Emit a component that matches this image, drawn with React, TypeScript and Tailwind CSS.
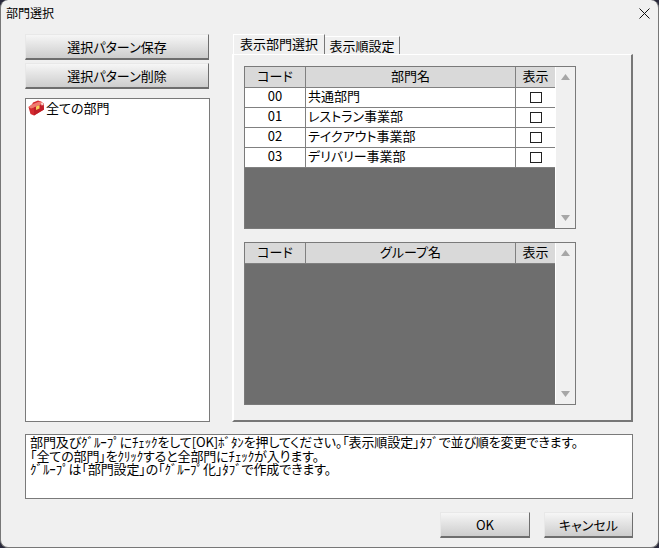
const FONT = '"Noto Sans CJK JP", "Liberation Sans", sans-serif';

const departments = [
  { code: '00', name: '共通部門' },
  { code: '01', name: 'レストラン事業部' },
  { code: '02', name: 'テイクアウト事業部' },
  { code: '03', name: 'デリバリー事業部' },
];

const GradButton = ({ label, className }: { label: string; className: string }) => (
  <button
    className={`flex items-center justify-center bg-gradient-to-b from-[#f6f6f6] to-[#cdcdcd] border border-[#e8e8e8] border-r-[#6e6e6e] border-b-[#6e6e6e] border-b-2 text-[13px] text-black ${className}`}
  >
    {label}
  </button>
);

const FolderIcon = () => (
  <svg width="17" height="17" viewBox="0 0 17 17" className="shrink-0">
    <path d="M0.5 7 L4 4.5 L5 2.5 L10 0.5 L13 1.5 L15.5 3.5 L16 9.5 L6 15.5 L2.5 14 Z" fill="#d42a30" />
    <path d="M0.5 7 L4 4.5 L10 2 L13 1.5 L15.5 3.5 L6 7.5 L3 8.5 Z" fill="#ef7a70" />
    <path d="M6 7.5 L15.5 3.5 L16 9.5 L6 15.5 Z" fill="#c01f28" />
    <path d="M8 6.5 L11.5 5 L11.5 8.5 L8 10 Z" fill="#f6cf5a" />
    <path d="M13 3 L15 2.5 L15.5 5 L13.5 5.5 Z" fill="#f8d8d0" />
  </svg>
);

const Table = ({
  title,
  rows,
}: {
  title: string;
  rows: { code: string; name: string }[];
}) => (
  <div className="flex w-[332px] h-[163px] border border-[#7a7a7a]">
    <div className="flex-1 bg-[#6e6e6e] flex flex-col">
      <div className="flex h-[21px] shrink-0 bg-[#d9d9d9] border-b border-[#808080] text-[13px] text-black">
        <div className="w-[61px] border-r border-[#808080] flex items-center justify-center pb-[3px]">コード</div>
        <div className="w-[210px] border-r border-[#808080] flex items-center justify-center pb-[3px]">{title}</div>
        <div className="flex-1 flex items-center justify-center pb-[3px]">表示</div>
      </div>
      {rows.map((r) => (
        <div key={r.code} className="flex h-[20px] shrink-0 bg-white border-b border-[#808080] text-[13px] text-black">
          <div className="w-[61px] border-r border-[#808080] flex items-center justify-center pb-[4px]">{r.code}</div>
          <div className="w-[210px] border-r border-[#808080] flex items-center pl-[2px] pb-[4px]">{r.name}</div>
          <div className="flex-1 flex items-center justify-center">
            <div className="w-[12px] h-[11px] border border-[#222] bg-white" />
          </div>
        </div>
      ))}
    </div>
    <div className="w-[20px] bg-[#f0f0f0] border-l border-white flex flex-col items-center justify-between py-[7px]">
      <svg width="9" height="6" viewBox="0 0 9 6"><path d="M4.5 0 L9 6 L0 6 Z" fill="#a6a6a6" /></svg>
      <svg width="9" height="6" viewBox="0 0 9 6"><path d="M0 0 L9 0 L4.5 6 Z" fill="#a6a6a6" /></svg>
    </div>
  </div>
);

export default function App() {
  return (
    <div className="w-[659px] h-[548px] bg-[#2a2a3c] [font-feature-settings:'palt']" style={{ fontFamily: FONT }}>
      <div className="w-full h-full bg-[#f0f0f0] rounded-lg border-l border-b border-r border-[#777] flex flex-col">
        {/* title bar */}
        <div className="h-[26px] shrink-0 flex items-center justify-between pl-[5px] pr-[8px] text-xs text-black [font-feature-settings:normal]">
          <span>部門選択</span>
          <svg width="11" height="11" viewBox="0 0 11 11">
            <path d="M0.5 0.5 L10.5 10.5 M10.5 0.5 L0.5 10.5" stroke="#111" strokeWidth="1" />
          </svg>
        </div>

        <div className="flex-1 flex flex-col pl-[24px] pr-[25px] pt-[8px]">
          <div className="flex gap-[22px] h-[388px]">
            {/* left column */}
            <div className="w-[185px] flex flex-col">
              <GradButton label="選択パターン保存" className="h-[26px] w-[184px]" />
              <GradButton label="選択パターン削除" className="h-[26px] w-[184px] mt-[3px]" />
              <div className="mt-[9px] flex-1 bg-white border border-[#7a7a7a] flex items-start gap-px pt-px pl-[2px] text-[13px] leading-[16px] text-black">
                <FolderIcon />
                <span>全ての部門</span>
              </div>
            </div>

            {/* tabs */}
            <div className="flex-1 flex flex-col">
              <div className="flex h-[20px] items-end pl-px text-[13px] text-black">
                <div className="h-[20px] w-[92px] bg-[#f0f0f0] border-t border-l border-white border-r border-r-[#777] flex items-center justify-center pb-px">
                  表示部門選択
                </div>
                <div className="h-[18px] w-[75px] bg-[#f0f0f0] border-t border-white border-r border-r-[#777] flex items-center justify-center">
                  表示順設定
                </div>
              </div>
              <div className="flex-1 border-t border-l-2 border-white border-r-2 border-b-2 border-r-[#777] border-b-[#777] pl-[10px] pt-[11px] flex flex-col gap-[13px]">
                <Table title="部門名" rows={departments} />
                <Table title="グループ名" rows={[]} />
              </div>
            </div>
          </div>

          {/* message */}
          <div className="mt-[12px] h-[65px] bg-white border border-[#7a7a7a] pl-[4px] text-[13px] leading-[13.5px] tracking-[-0.12px] text-black whitespace-pre">
            {'部門及びｸﾞﾙｰﾌﾟにﾁｪｯｸをして[OK]ﾎﾞﾀﾝを押してください。「表示順設定」ﾀﾌﾞで並び順を変更できます。\n「全ての部門」をｸﾘｯｸすると全部門にﾁｪｯｸが入ります。\nｸﾞﾙｰﾌﾟは「部門設定」の「ｸﾞﾙｰﾌﾟ化」ﾀﾌﾞで作成できます。'}
          </div>

          {/* footer buttons */}
          <div className="mt-[13px] flex justify-end gap-[14px]">
            <GradButton label="OK" className="h-[26px] w-[90px]" />
            <GradButton label="キャンセル" className="h-[26px] w-[89px]" />
          </div>
        </div>
      </div>
    </div>
  );
}
